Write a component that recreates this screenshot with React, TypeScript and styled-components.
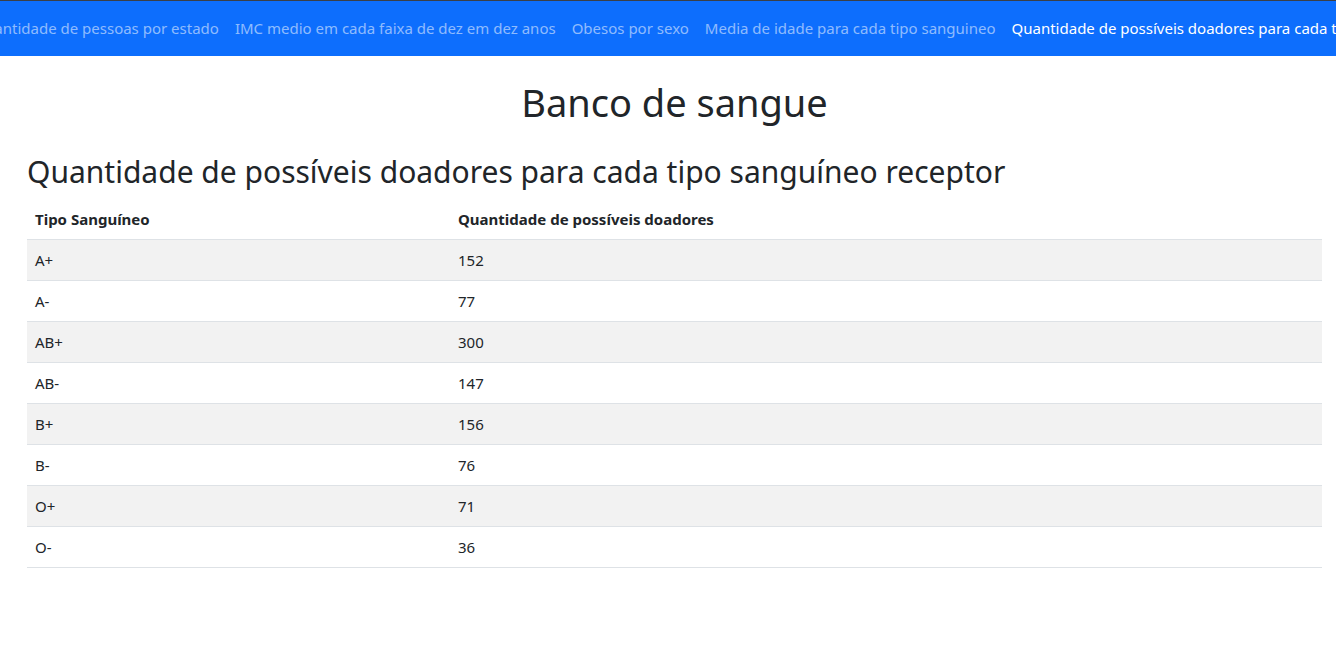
import React from 'react'
import styled, { createGlobalStyle } from 'styled-components'

const GlobalStyle = createGlobalStyle`
  html, body {
    margin: 0;
    padding: 0;
    background: #fff;
  }
  body {
    font-family: 'Noto Sans', 'Open Sans', sans-serif;
    font-size: 16px;
    line-height: 1.5;
    color: #212529;
    overflow: hidden;
  }
`

const links = [
  { label: 'Quantidade de pessoas por estado', active: false },
  { label: 'IMC medio em cada faixa de dez em dez anos', active: false },
  { label: 'Obesos por sexo', active: false },
  { label: 'Media de idade para cada tipo sanguineo', active: false },
  { label: 'Quantidade de possíveis doadores para cada tipo sanguíneo receptor', active: true },
]

const rows: [string, number][] = [
  ['A+', 152],
  ['A-', 77],
  ['AB+', 300],
  ['AB-', 147],
  ['B+', 156],
  ['B-', 76],
  ['O+', 71],
  ['O-', 36],
]

const App: React.FC = () => (
  <>
    <GlobalStyle />
    <Navbar>
      <NavList>
        {links.map(link => (
          <NavLink key={link.label} active={link.active}>
            {link.label}
          </NavLink>
        ))}
      </NavList>
    </Navbar>
    <Main>
      <Title>Banco de sangue</Title>
      <Subtitle>
        Quantidade de possíveis doadores para cada tipo sanguíneo receptor
      </Subtitle>
      <Table>
        <thead>
          <tr>
            <Th first>Tipo Sanguíneo</Th>
            <Th>Quantidade de possíveis doadores</Th>
          </tr>
        </thead>
        <tbody>
          {rows.map(([tipo, qtd], i) => (
            <Row key={tipo} striped={i % 2 === 0}>
              <Td>{tipo}</Td>
              <Td>{qtd}</Td>
            </Row>
          ))}
        </tbody>
      </Table>
    </Main>
  </>
)

const Navbar = styled.nav`
  display: flex;
  justify-content: center;
  height: 56px;
  padding-left: 138px;
  box-sizing: border-box;
  background: #0d6efd;
  border-top: 1px solid #3a3f47;
  overflow: hidden;
`

const NavList = styled.ul`
  display: flex;
  flex-shrink: 0;
  align-items: center;
  margin: 0;
  padding: 0 0 2px;
  list-style: none;
  white-space: nowrap;
`

const NavLink = styled.li<{ active?: boolean }>`
  padding: 8px;
  font-size: 15px;
  line-height: 24px;
  color: ${({ active }) => (active ? '#ffffff' : 'rgba(255, 255, 255, 0.55)')};
  cursor: pointer;
`

const Main = styled.main`
  padding: 0 14px 0 27px;
`

const Title = styled.h1`
  margin: 24px 0 20px;
  text-align: center;
  font-size: 38px;
  font-weight: 400;
  line-height: 1.2;
`

const Subtitle = styled.h2`
  margin: 0 0 9px;
  padding-top: 8px;
  font-size: 30px;
  font-weight: 400;
  line-height: 1.2;
`

const Table = styled.table`
  width: 100%;
  border-collapse: collapse;
`

const Th = styled.th<{ first?: boolean }>`
  width: ${({ first }) => (first ? '407px' : 'auto')};
  padding: 8px;
  text-align: left;
  font-weight: 700;
  font-size: 15px;
  line-height: 24px;
  border-bottom: 1px solid #dee2e6;
`

const Row = styled.tr<{ striped?: boolean }>`
  background: ${({ striped }) => (striped ? '#f2f2f2' : 'transparent')};
`

const Td = styled.td`
  padding: 8px;
  font-size: 15px;
  line-height: 24px;
  border-bottom: 1px solid #dee2e6;
`

export default App
